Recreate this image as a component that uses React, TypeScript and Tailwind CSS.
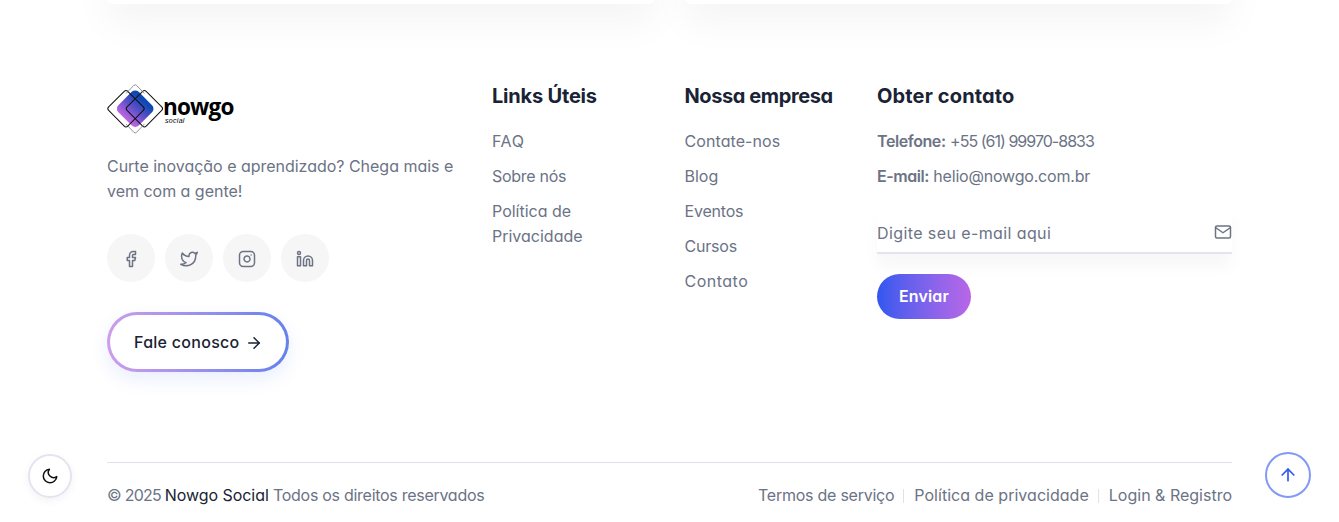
import { ReactNode } from "react";
import { FiArrowRight, FiArrowUp, FiFacebook, FiInstagram, FiLinkedin, FiMail, FiMoon, FiTwitter } from "react-icons/fi";

function Logo() {
  return (
    <div className="flex h-[50px] items-start">
      <svg width="56" height="50" viewBox="0 0 56 50" fill="none" className="overflow-visible">
        <defs>
          <linearGradient id="gem" x1="17" y1="38" x2="38" y2="14" gradientUnits="userSpaceOnUse" gradientTransform="rotate(-45 28.2 24.7)">
            <stop offset="0.05" stopColor="#cb6ae4" />
            <stop offset="0.5" stopColor="#6650cc" />
            <stop offset="0.9" stopColor="#0c49b4" />
          </linearGradient>
        </defs>
        <rect x="13.8" y="10.3" width="28.8" height="28.8" rx="5" transform="rotate(45 28.2 24.7)" fill="url(#gem)" />
        <rect x="5.5" y="11.2" width="27" height="27" rx="2.5" transform="rotate(45 19 24.7)" stroke="#111" strokeWidth="1" />
        <rect x="23.9" y="11.2" width="27" height="27" rx="2.5" transform="rotate(45 37.4 24.7)" stroke="#111" strokeWidth="1" />
        <path d="M19 9.5 26.7 1.5Q28.2 0 29.7 1.5L37.4 9.5M19 40l7.7 8.2q1.5 1.5 3 0l7.7-8.2" stroke="#777" strokeWidth=".8" />
      </svg>
      <div className="flex flex-col pt-[10px]">
        <span className="font-['Open_Sans'] text-[22.5px] leading-[25px] font-bold tracking-[-0.8px] text-black">nowgo</span>
        <span className="-mt-[2px] pl-[2px] font-['Liberation_Sans'] text-[7px] leading-[8px] tracking-[0.3px] text-black italic">social</span>
      </div>
    </div>
  );
}

function Social({ children }: { children: ReactNode }) {
  return <a className="flex size-12 items-center justify-center rounded-full bg-[#f6f6f6] pt-[2px] text-[18px]">{children}</a>;
}

const heading = "text-[20px] leading-[26px] font-bold text-[#192335]";

export default function App() {
  return (
    <div className="relative h-[522px] overflow-hidden bg-white font-['Inter',sans-serif] text-[16px] leading-[25px] text-[#6b7385] [font-feature-settings:'cv11']">
      <div className="mx-auto flex h-1 w-[1125px] gap-[30px] [&>div]:flex-1">
        <div className="relative"><div className="absolute inset-x-0 bottom-0 h-40 rounded-md bg-white shadow-[0_20px_38px_rgba(0,0,0,0.045)]" /></div>
        <div className="relative"><div className="absolute inset-x-0 bottom-0 h-40 rounded-md bg-white shadow-[0_20px_38px_rgba(0,0,0,0.045)]" /></div>
      </div>

      <footer className="mx-auto w-[1125px] pt-[79px]">
        <div className="flex h-[379px] whitespace-nowrap">
          <section className="w-[385px] pt-px">
            <Logo />
            <p className="mt-5 tracking-[-0.02px]">Curte inovação e aprendizado? Chega mais e<br />vem com a gente!</p>
            <div className="mt-[30px] flex gap-[10px]">
              <Social><FiFacebook /></Social>
              <Social><FiTwitter /></Social>
              <Social><FiInstagram /></Social>
              <Social><FiLinkedin /></Social>
            </div>
            <a className="mt-[30px] flex h-[60px] w-[182px] rounded-full bg-linear-to-r from-[#cd9dea] to-[#6481ed] p-[3px] shadow-[0_7px_18px_rgba(47,87,239,0.1)]">
              <span className="flex flex-1 items-center gap-[5px] rounded-full bg-white pl-6 font-medium text-[#192335]">
                <span className="tracking-[0.28px]">Fale conosco</span><FiArrowRight size={18} className="mt-px" />
              </span>
            </a>
          </section>

          <section className="w-[192.5px]">
            <h4 className={`${heading} tracking-[-0.2px]`}>Links Úteis</h4>
            <ul className="mt-5 flex flex-col gap-[10px]">
              <li className="tracking-[0.6px]">FAQ</li>
              <li className="tracking-[-0.28px]">Sobre nós</li>
              <li>Política de<br />Privacidade</li>
            </ul>
          </section>

          <section className="w-[192.5px]">
            <h4 className={`${heading} tracking-[-0.4px]`}>Nossa empresa</h4>
            <ul className="mt-5 flex flex-col gap-[10px]">
              <li className="tracking-[0.08px]">Contate-nos</li>
              <li>Blog</li>
              <li className="tracking-[-0.2px]">Eventos</li>
              <li className="tracking-[-0.2px]">Cursos</li>
              <li className="tracking-[0.5px]">Contato</li>
            </ul>
          </section>

          <section className="w-[355px]">
            <h4 className={`${heading} tracking-[0.15px]`}>Obter contato</h4>
            <ul className="mt-5 flex flex-col gap-[10px]">
              <li><span className="font-semibold tracking-[-0.42px]">Telefone:</span> <span className="tracking-[-0.98px]">+55 (61) 99970-8833</span></li>
              <li><span className="font-semibold tracking-[-0.45px]">E-mail:</span> <span className="tracking-[-0.2px]">helio@nowgo.com.br</span></li>
            </ul>
            <div className="mt-[15px] flex h-[50px] items-center justify-between border-b-2 border-[#e6e3f1] bg-white pt-[10px] shadow-[0_13px_14px_rgba(79,35,35,0.03)]">
              <span className="tracking-[0.4px]">Digite seu e-mail aqui</span>
              <FiMail size={18} className="mb-[3px]" />
            </div>
            <button className="mt-5 flex h-[45px] w-[94px] items-center justify-center rounded-full bg-linear-to-r from-[#2f57ef] to-[#b966e7] font-semibold tracking-[0.15px] text-white">Enviar</button>
          </section>
        </div>

        <div className="flex items-center justify-between border-t border-[#e1e1ec] pt-[20px] whitespace-nowrap">
          <p><span className="tracking-[-0.75px]">© 2025 </span><span className="tracking-[-0.05px] text-[#192335]">Nowgo Social</span><span className="tracking-[-0.28px]"> Todos os direitos reservados</span></p>
          <div className="flex items-center gap-[10px]">
            <span className="tracking-[-0.25px]">Termos de serviço</span>
            <i className="mr-0 -ml-px h-[14px] w-px bg-[#e1e1ec]" />
            <span className="tracking-[0.03px]">Política de privacidade</span>
            <i className="mr-0 -ml-px h-[14px] w-px bg-[#e1e1ec]" />
            <span>Login &amp; Registro</span>
          </div>
        </div>
      </footer>

      <button className="fixed top-[454px] left-[28px] flex size-11 items-center justify-center rounded-full border-2 border-[#e6e3f1] bg-white pr-px text-[18px] text-[#111] shadow-[0_3px_10px_rgba(0,0,0,0.05)]"><FiMoon /></button>
      <button className="fixed top-[452px] right-[28px] flex size-[46px] items-center justify-center rounded-full border-2 border-[#8299f5] bg-white text-[20px] text-[#2f57ef]"><FiArrowUp /></button>
    </div>
  );
}
